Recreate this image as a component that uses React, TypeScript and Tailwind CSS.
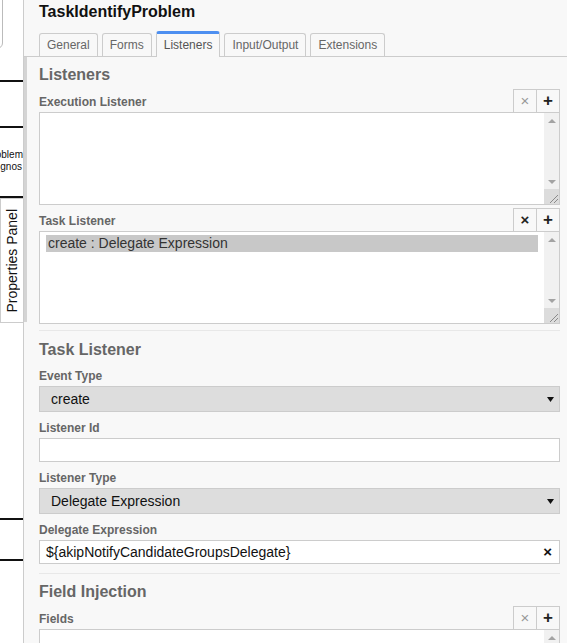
import React from 'react';

const labelCls = "text-[12px] font-bold leading-4 text-[#666]";
const headingCls = "text-[16px] font-bold leading-5 text-[#666]";

const Caret = () => (
  <svg width="7" height="5" viewBox="0 0 7 5">
    <path d="M0 0H7L3.5 5Z" fill="#111" />
  </svg>
);

const ScrollArrow = ({ up }: { up?: boolean }) => (
  <svg width="8" height="4" viewBox="0 0 8 4">
    <path d={up ? "M0 4L4 0L8 4Z" : "M0 0L8 0L4 4Z"} fill="#a3a3a3" />
  </svg>
);

const FakeScrollbar = () => (
  <div className="flex w-[15px] flex-col bg-[#f1f1f1]">
    <div className="flex h-[15px] items-center justify-center">
      <ScrollArrow up />
    </div>
    <div className="flex-1" />
    <div className="flex h-[15px] items-center justify-center">
      <ScrollArrow />
    </div>
    <div className="h-[15px] bg-[#dcdcdc]">
      <svg width="15" height="15" viewBox="0 0 15 15">
        <path d="M14 6L6 14M14 10L10 14" stroke="#8a8a8a" strokeWidth="1" />
      </svg>
    </div>
  </div>
);

const ListHeader = ({ label, canRemove }: { label: string; canRemove?: boolean }) => (
  <div className="flex h-[23px] items-end justify-between">
    <span className={`${labelCls} pb-[2px]`}>{label}</span>
    <div className="flex h-full">
      <div className={`flex h-[23px] w-[24px] items-center justify-center border border-b-0 border-[#ccc] text-[15px] ${canRemove ? 'font-bold text-[#222]' : 'text-[#999]'}`}>
        ×
      </div>
      <div className="-ml-px flex h-[23px] w-[24px] items-center justify-center border border-b-0 border-[#ccc] text-[17px] font-bold text-[#222]">
        +
      </div>
    </div>
  </div>
);

const ListBox = ({ items }: { items: string[] }) => (
  <div className="flex h-[93px] border border-[#ccc] bg-white">
    <div className="flex-1 px-[6px] pt-[3px]">
      {items.map((item) => (
        <div key={item} className="h-[17px] bg-[#c8c8c8] pl-[2px] text-[14px] leading-[17px] text-[#333]">
          {item}
        </div>
      ))}
    </div>
    <FakeScrollbar />
  </div>
);

const Field = ({ label, children }: { label: string; children: React.ReactNode }) => (
  <div className="pt-2">
    <div className={`${labelCls} mb-[2px]`}>{label}</div>
    {children}
  </div>
);

const SelectBox = ({ value }: { value: string }) => (
  <div className="flex h-[26px] items-center justify-between border border-[#ccc] bg-[#ddd] pl-[11px] pr-[5px] text-[14px] text-[#111]">
    <span>{value}</span>
    <Caret />
  </div>
);

const TextBox = ({ value, clearable }: { value?: string; clearable?: boolean }) => (
  <div className="flex h-[24px] items-center justify-between border border-[#ccc] bg-white pl-[6px] pr-[7px] text-[14px] text-[#111]">
    <span>{value}</span>
    {clearable && <span className="text-[15px] font-bold text-[#111]">×</span>}
  </div>
);

const Tab = ({ label, active }: { label: string; active?: boolean }) =>
  active ? (
    <div className="-mb-px h-[26px] rounded-t-[3px] border border-b-0 border-t-[3px] border-[#ccc] border-t-[#4d8ff0] bg-[#f8f8f8] px-[7px] text-[12px] leading-[22px] text-[#555]">
      {label}
    </div>
  ) : (
    <div className="h-[23px] rounded-t-[3px] border border-b-0 border-[#ccc] bg-[#f8f8f8] px-[7px] text-[12px] leading-[22px] text-[#666]">
      {label}
    </div>
  );

// strip of the diagram canvas that shows left of the panel
const Canvas = () => (
  <div className="relative w-[23px] shrink-0 overflow-hidden bg-white">
    <div className="absolute left-[-60px] top-[-10px] h-[59px] w-[63px] rounded-[6px] border border-[#bbb]" />
    <div className="absolute left-0 top-[80px] h-[2px] w-full bg-[#111]" />
    <div className="absolute left-0 top-[126px] h-[2px] w-full bg-[#111]" />
    <div className="absolute right-0 top-[149px] text-right text-[10px] leading-[12px] text-[#111]">
      <div>oblem</div>
      <div className="pr-px">gnos</div>
    </div>
    <div className="absolute left-0 top-[196px] h-[2px] w-full bg-[#111]" />
    <div className="absolute left-0 top-[198px] flex h-[125px] w-[23px] items-center justify-center border border-r-0 border-[#ccc] bg-white">
      <span className="rotate-180 whitespace-nowrap text-[14px] text-[#111] [writing-mode:vertical-rl]">
        Properties Panel
      </span>
    </div>
    <div className="absolute left-0 top-[518px] h-[2px] w-full bg-[#111]" />
    <div className="absolute left-0 top-[559px] h-[2px] w-full bg-[#111]" />
  </div>
);

export default function App() {
  return (
    <div className="flex h-[643px] w-[567px] overflow-hidden bg-white font-['Liberation_Sans',Arial,sans-serif]">
      <Canvas />
      <div className="w-px shrink-0 bg-[#ccc]" />
      <div className="flex min-w-0 flex-1 flex-col bg-[#f8f8f8]">
        <div className="pl-[15px] pt-[2px] text-[16px] font-bold leading-5 text-[#111]">TaskIdentifyProblem</div>
        <div className="mt-[9px] flex items-end gap-[4px] border-b border-[#ccc] pl-[15px]">
          <Tab label="General" />
          <Tab label="Forms" />
          <Tab label="Listeners" active />
          <Tab label="Input/Output" />
          <Tab label="Extensions" />
        </div>
        <div className="flex flex-1">
          <div className="w-[3px] shrink-0">
            <div className="h-[265px] bg-[#d4d4d4]" />
          </div>
          <div className="min-w-0 flex-1 pl-[12px] pr-[7px]">
            <div className="border-b border-[#e8e8e8] pb-[6px] pt-2">
              <div className={headingCls}>Listeners</div>
              <div className="mt-1">
                <ListHeader label="Execution Listener" />
                <ListBox items={[]} />
              </div>
              <div className="mt-[3px]">
                <ListHeader label="Task Listener" canRemove />
                <ListBox items={['create : Delegate Expression']} />
              </div>
            </div>
            <div className="border-b border-[#e8e8e8] pb-[9px] pt-[9px]">
              <div className={headingCls}>Task Listener</div>
              <Field label="Event Type">
                <SelectBox value="create" />
              </Field>
              <Field label="Listener Id">
                <TextBox />
              </Field>
              <Field label="Listener Type">
                <SelectBox value="Delegate Expression" />
              </Field>
              <Field label="Delegate Expression">
                <TextBox value="${akipNotifyCandidateGroupsDelegate}" clearable />
              </Field>
            </div>
            <div className="pt-2">
              <div className={headingCls}>Field Injection</div>
              <div className="mt-1">
                <ListHeader label="Fields" />
                <ListBox items={[]} />
              </div>
            </div>
          </div>
        </div>
      </div>
    </div>
  );
}
